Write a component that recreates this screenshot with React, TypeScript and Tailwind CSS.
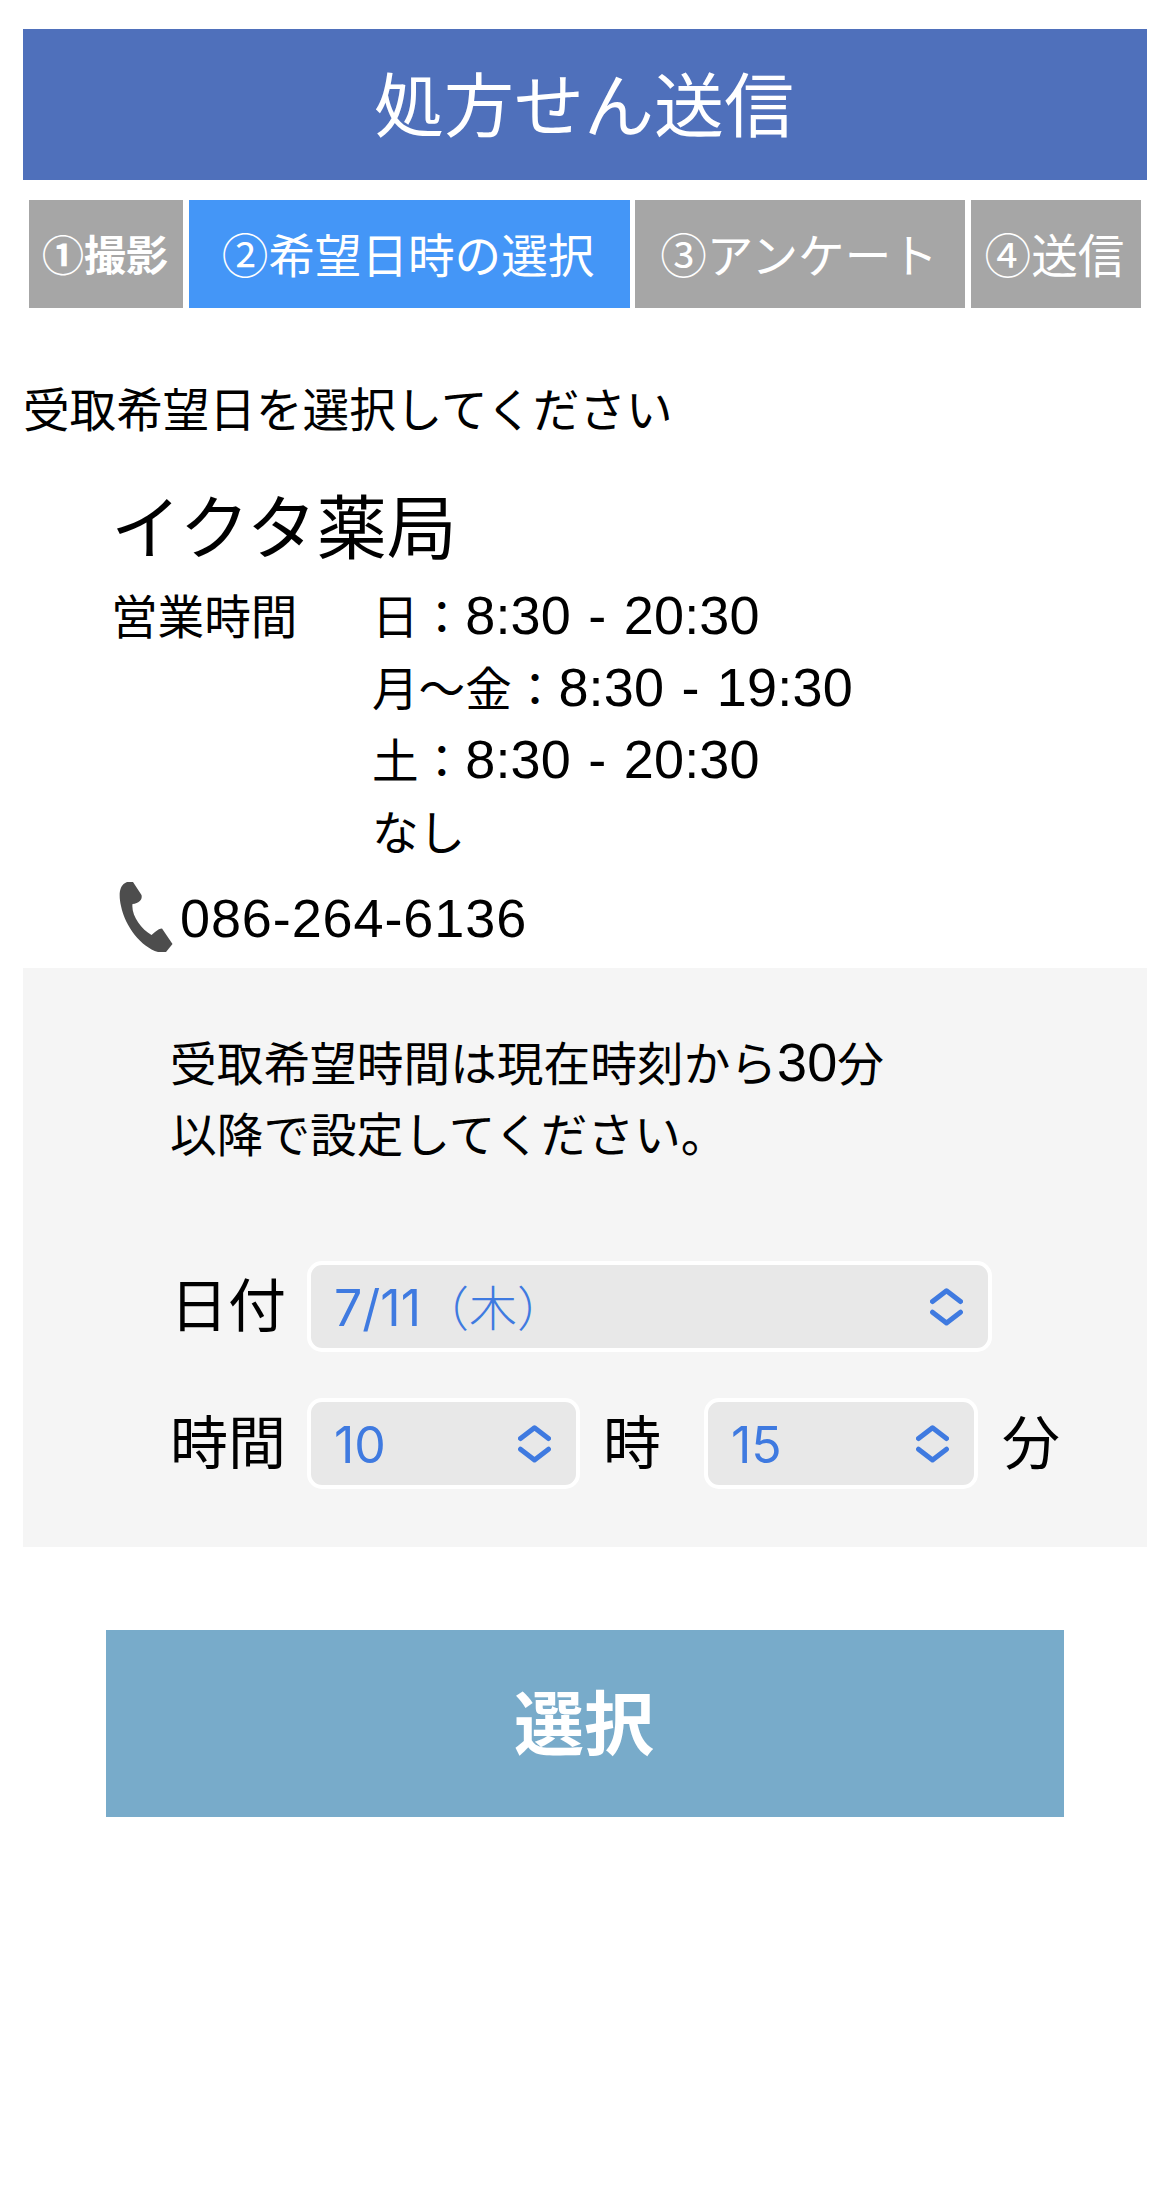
import React from "react";

const steps = [
  { label: "①撮影", box: "w-[154px] bg-[#a6a6a6] text-[42px] font-bold" },
  { label: "②希望日時の選択", box: "w-[441px] bg-[#4496f7] text-[46.6px]" },
  { label: "③アンケート", box: "w-[330px] bg-[#a6a6a6] text-[46.6px]" },
  { label: "④送信", box: "w-[170px] bg-[#a6a6a6] text-[46.6px]" },
];

const hours = [
  { day: "日：", time: "8:30 - 20:30" },
  { day: "月〜金：", time: "8:30 - 19:30" },
  { day: "土：", time: "8:30 - 20:30" },
  { day: "なし", time: "" },
];

function Digits({ children }: { children: React.ReactNode }) {
  return (
    <span className="font-['Liberation_Sans',sans-serif] text-[54px] leading-none [word-spacing:2px]">
      {children}
    </span>
  );
}

function SelectBox({
  className,
  children,
}: {
  className: string;
  children: React.ReactNode;
}) {
  return (
    <button
      type="button"
      className={`flex h-[91px] shrink-0 items-center justify-between rounded-[15px] border-4 border-white bg-[#e8e8e8] pl-[23px] pr-[25px] font-['Inter','Noto_Sans_CJK_JP',sans-serif] text-[50px] leading-none text-[#3f7ae0] ${className}`}
    >
      <span className="pt-[2px] whitespace-nowrap">{children}</span>
      <svg width="33" height="38" viewBox="0 0 33 38" fill="none">
        <path
          d="M2.5 13.5 16.5 2.8 30.5 13.5M2.5 24.2 16.5 34.9 30.5 24.2"
          stroke="#3f7ae0"
          strokeWidth="5"
          strokeLinecap="round"
          strokeLinejoin="round"
        />
      </svg>
    </button>
  );
}

export default function App() {
  return (
    <div className="min-h-[2204px] w-[1164px] bg-white pt-[29px] pr-[17px] pl-[23px] font-['Noto_Sans_CJK_JP',sans-serif] text-[46.6px] text-black">
      {/* Header */}
      <h1 className="flex h-[151px] items-center justify-center bg-[#4f70bb] pr-[2px] pb-[6px] text-[70px] leading-none text-white">
        処方せん送信
      </h1>

      {/* Steps */}
      <ol className="mt-[20px] flex gap-[5.5px] pl-[6px]">
        {steps.map((step) => (
          <li
            key={step.label}
            className={`flex h-[108px] shrink-0 items-center justify-center pr-[2px] pb-[2px] leading-none whitespace-nowrap text-white ${step.box}`}
          >
            {step.label}
          </li>
        ))}
      </ol>

      <p className="mt-[63px] h-[72px] leading-[72px]">
        受取希望日を選択してください
      </p>

      {/* Pharmacy */}
      <section className="mt-[31px] h-[494px] pl-[88px]">
        <h2 className="h-[100px] text-[70px] leading-[100px]">イクタ薬局</h2>
        <div className="mt-[4px] flex">
          <div className="w-[261px] leading-[72px]">営業時間</div>
          <ul>
            {hours.map((row) => (
              <li key={row.day} className="h-[72px] leading-[72px]">
                {row.day}
                {row.time && (
                  <span className="tracking-[0.2px]">
                    <Digits>{row.time}</Digits>
                  </span>
                )}
              </li>
            ))}
          </ul>
        </div>
        <div className="mt-[15px] flex h-[72px] items-center">
          <svg
            className="ml-[8px] shrink-0"
            width="54"
            height="70"
            viewBox="0 0 54 70"
            fill="#4d4d4d"
          >
            <path d="M8 0H14L22.5 13C23.5 17 21 21 13.5 22C12 33 22 47 32.5 53L36 50C39 47.5 41 46.5 43 46.5L53.5 62L47 70H39C22 65 6 44 2 24C-.5 13 0 3 8 0Z" />
          </svg>
          <span className="ml-[7px] tracking-[0.9px]">
            <Digits>086-264-6136</Digits>
          </span>
        </div>
      </section>

      {/* Date and time */}
      <section className="h-[579px] bg-[#f5f5f5] pt-[57px] pl-[147px]">
        <p className="leading-[71px] tracking-[0.1px]">
          受取希望時間は現在時刻から<Digits>30</Digits>分
          <br />
          以降で設定してください。
        </p>
        <div className="mt-[94px] flex items-center">
          <span className="w-[137px] pb-[9px] text-[58px] leading-none">
            日付
          </span>
          <SelectBox className="w-[685px]">
            7/11<span className="text-[48px] font-light">（木）</span>
          </SelectBox>
        </div>
        <div className="mt-[46px] flex items-center">
          <span className="w-[137px] pb-[9px] text-[58px] leading-none">
            時間
          </span>
          <SelectBox className="w-[273px]">10</SelectBox>
          <span className="ml-[23px] w-[101px] pb-[9px] text-[58px] leading-none">
            時
          </span>
          <SelectBox className="w-[274px]">15</SelectBox>
          <span className="ml-[24px] pb-[9px] text-[58px] leading-none">
            分
          </span>
        </div>
      </section>

      <button
        type="button"
        className="mt-[83px] ml-[83px] flex h-[187px] w-[958px] items-center justify-center bg-[#78abca] pr-[2px] pb-[7px] text-[70px] leading-none font-bold text-white"
      >
        選択
      </button>
    </div>
  );
}
